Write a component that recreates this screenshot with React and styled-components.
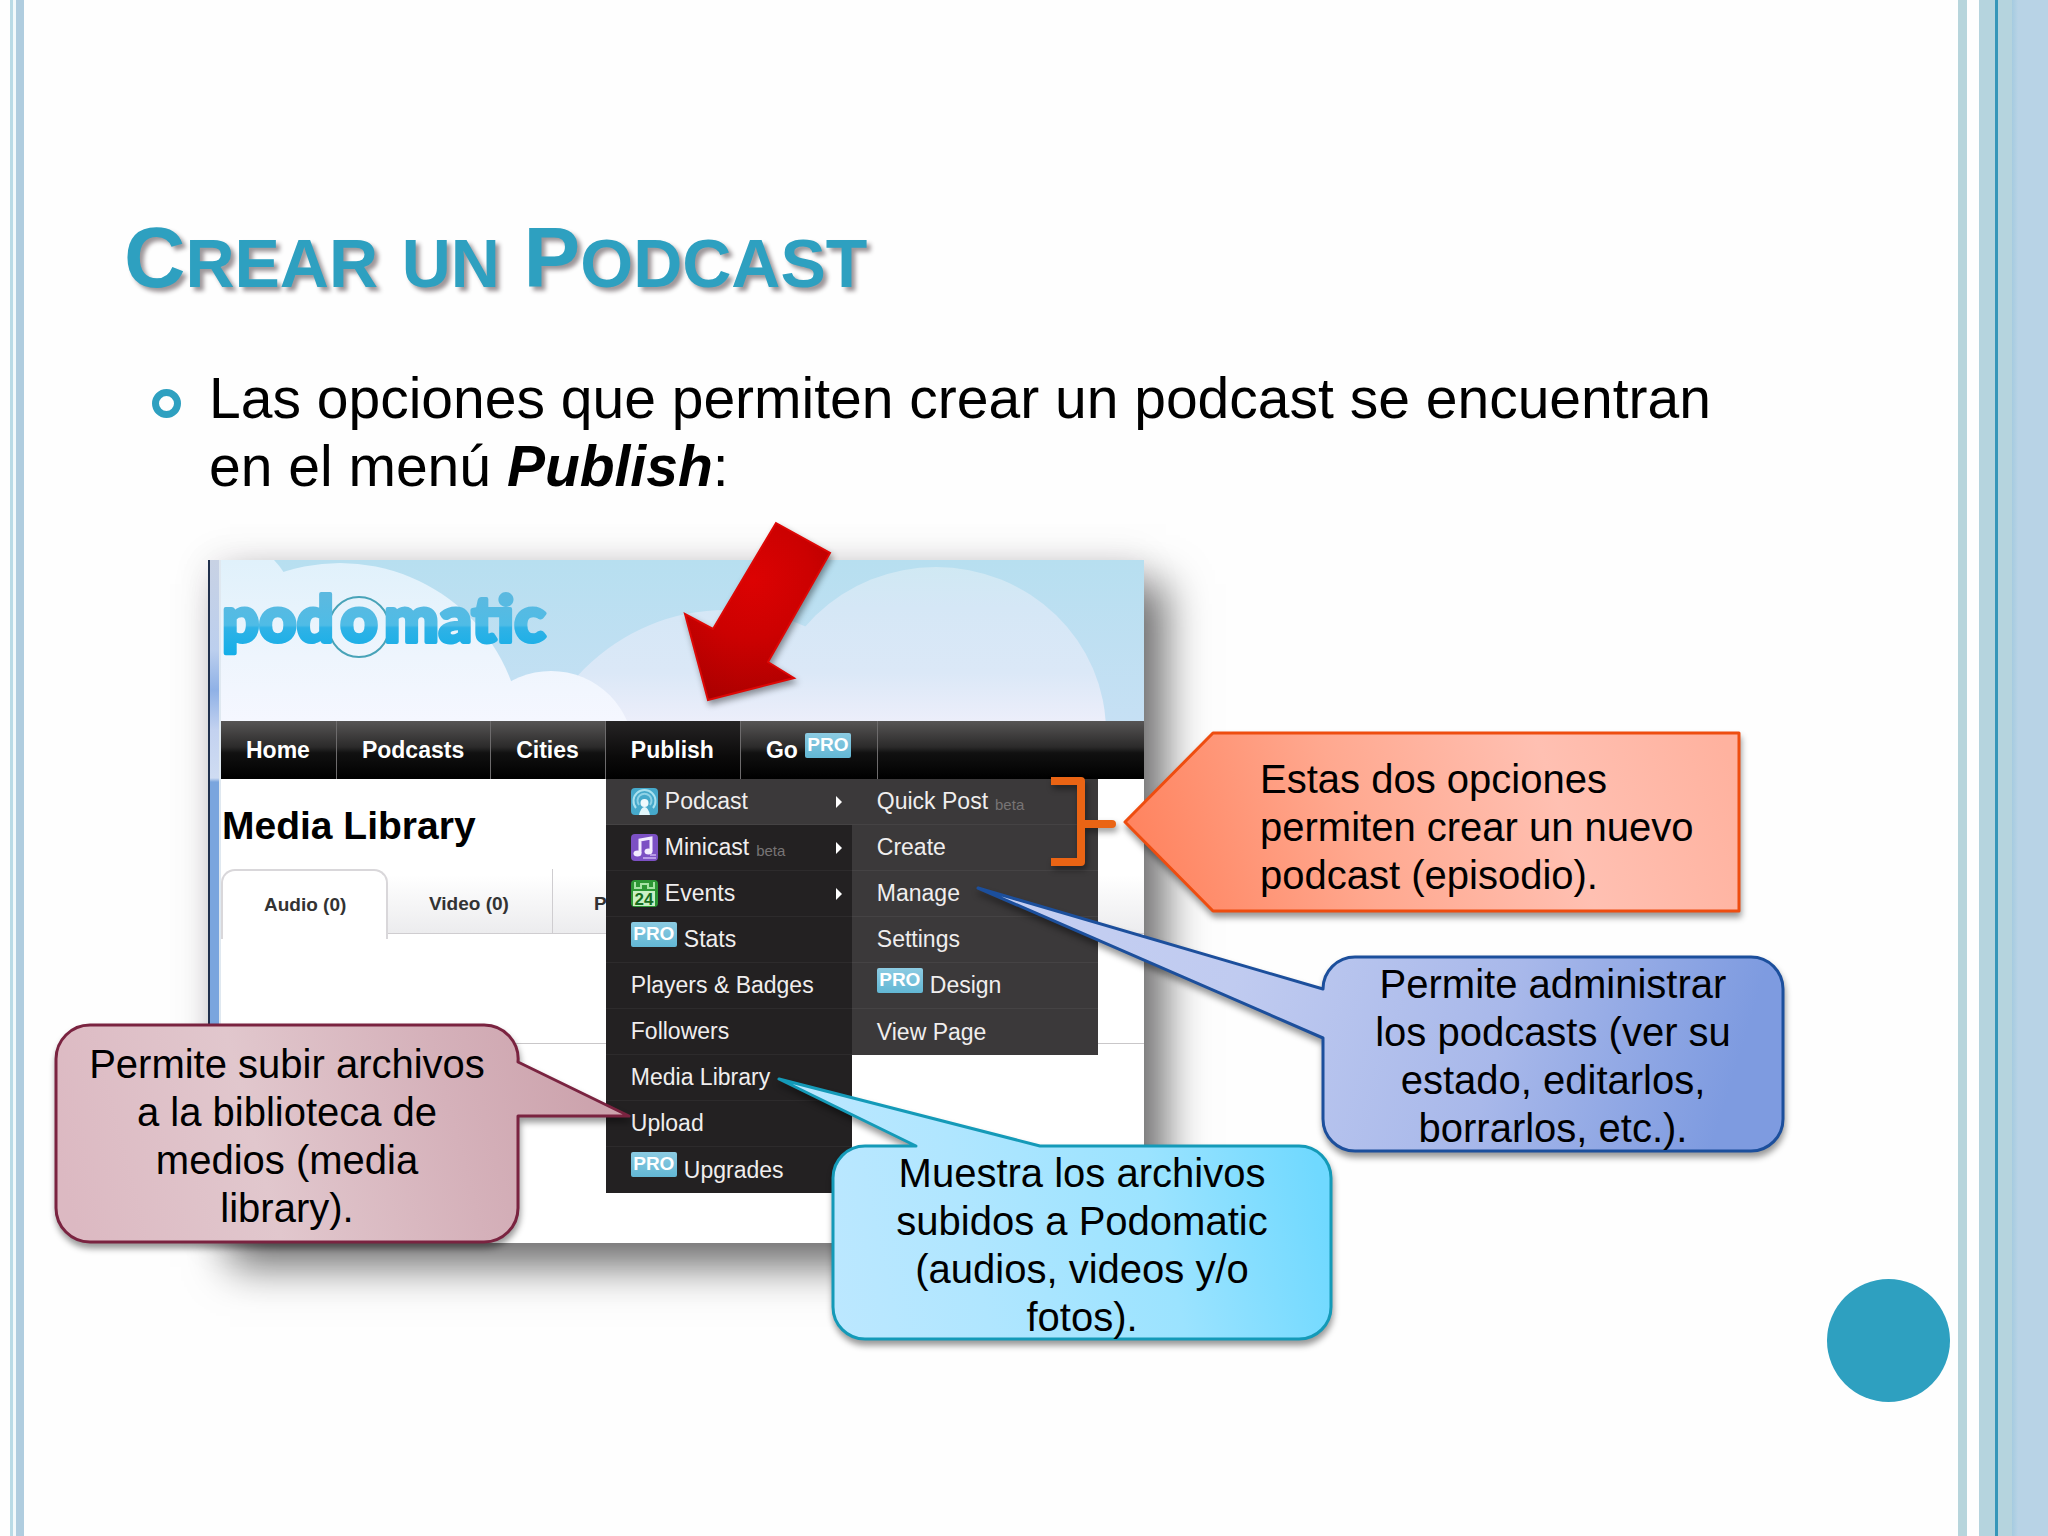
import styled, { createGlobalStyle, css } from "styled-components";

const GlobalStyle = createGlobalStyle`
  * {
    box-sizing: border-box;
  }
  body {
    margin: 0;
    background: #fefefe;
    color: #000;
    font-family: "Liberation Sans", Arial, sans-serif;
  }
  h1, h2, p, ul, figure {
    margin: 0;
    padding: 0;
  }
  ul {
    list-style: none;
  }
`;

/* ---------- slide ---------- */

const Slide = styled.div`
  display: flex;
  min-height: 100vh;
  overflow: hidden;
`;

const LeftRail = styled.div`
  flex: 0 0 24px;
  background: linear-gradient(
    to right,
    #fefefe 10px,
    #b9dbe6 10px 13px,
    #f2f9fb 13px 16px,
    #b0cddf 16px
  );
`;

const RightRail = styled.div`
  flex: 0 0 90px;
  background: linear-gradient(
    to right,
    #b7d5dc 9px,
    #fefefe 9px 21px,
    #b5d4de 21px 37px,
    #3696b9 37px 40px,
    #b5d4de 40px 54px,
    #a5cbe0 54px,
    #b8d3e6 60px
  );
`;

const Main = styled.main`
  flex: 1;
  min-width: 0;
  padding: 210px 8px 0 98px;
`;

const Title = styled.h1`
  padding-left: 2px;
  color: #2ea0c0;
  font-size: 68px;
  line-height: 96px;
  text-transform: uppercase;
  text-shadow: 4px 4px 4px rgba(40, 25, 30, 0.45);
`;

const Initial = styled.span`
  font-size: 85px;
`;

const Points = styled.ul`
  max-width: 1600px;
  margin-top: 53px;
  padding-left: 30px;
`;

const Point = styled.li`
  display: flex;
  gap: 28px;
  font-size: 57px;
  line-height: 68px;
`;

const Ring = styled.span`
  flex: 0 0 29px;
  height: 29px;
  margin-top: 25px;
  border: 7px solid #2ea0c0;
  border-radius: 50%;
`;

const Keyword = styled.strong`
  font-style: italic;
`;

const Footer = styled.footer`
  display: flex;
  justify-content: flex-end;
  padding-top: 36px;
`;

const Dot = styled.div`
  width: 123px;
  height: 123px;
  border-radius: 50%;
  background: #2ea0c0;
`;

/* ---------- browser window ---------- */

const Figure = styled.figure`
  position: relative;
  margin: 60px 0 0 86px;
`;

const Browser = styled.div`
  display: flex;
  width: 936px;
  max-width: 100%;
  background: #fff;
  box-shadow:
    22px 24px 40px rgba(0, 0, 0, 0.54),
    0 0 36px rgba(40, 20, 40, 0.1);
`;

const WindowEdge = styled.div`
  flex: 0 0 13px;
  border-left: 2px solid #20304c;
  border-right: 2px solid #dfe8f0;
  background: linear-gradient(#c8d2e4, #bccfee 90px, #8fb1e6 130px, #c3d2f0 170px, #cfdcf2 218px, #7aa5de 222px);
`;

const Page = styled.div`
  flex: 1;
  min-width: 0;
`;

const Sky = styled.svg`
  display: block;
  width: 100%;
  height: 161px;
`;

const Nav = styled.nav`
  position: relative;
  z-index: 1;
  background: linear-gradient(#575555, #2b2a2a 45%, #111 55%, #000);
`;

const NavList = styled.ul`
  display: flex;
  height: 58px;
`;

const NavItem = styled.li`
  position: relative;
  border-right: 1px solid #6d6b6c;
  ${(props) => props.$open && css`
    background: linear-gradient(#262425, #0c0b0b 60%, #000);
  `}
`;

const NavLink = styled.a`
  display: flex;
  align-items: center;
  gap: 7px;
  height: 100%;
  padding: 0 26px 0 25px;
  color: #fff;
  font-size: 23px;
  font-weight: 700;
  text-decoration: none;
`;

const Menu = styled.ul`
  position: absolute;
  top: ${(props) => (props.$sub ? "0" : "100%")};
  left: ${(props) => (props.$sub ? "100%" : "0")};
  width: 246px;
  background: ${(props) => (props.$sub ? "#3b393a" : "#232122")};
`;

const MenuItem = styled.li`
  height: 46px;
  border-bottom: 1px solid ${(props) => (props.$light ? "#454344" : "#2d2b2c")};
  background: ${(props) => (props.$light ? "#3b393a" : "transparent")};
  &:last-child {
    border-bottom: 0;
  }
`;

const MenuLink = styled.a`
  display: flex;
  align-items: center;
  gap: 7px;
  height: 100%;
  padding: 0 10px 0 25px;
  color: #f0eeee;
  font-size: 23px;
  white-space: nowrap;
  text-decoration: none;
`;

const Pro = styled.span`
  align-self: flex-start;
  width: 46px;
  height: 25px;
  margin-top: ${(props) => (props.$nav ? "12px" : "5px")};
  border-radius: 2px;
  background: linear-gradient(#8ccbe2, #62b7d4);
  color: #fff;
  font-size: 19px;
  font-weight: 700;
  line-height: 24px;
  text-align: center;
`;

const Beta = styled.small`
  padding-top: 5px;
  color: #777475;
  font-size: 15px;
`;

const Caret = styled.span`
  margin-left: auto;
  border: 6px solid transparent;
  border-right: 0;
  border-left-color: #fff;
`;

const Heading = styled.h2`
  padding: 24px 0 0 1px;
  font-size: 39px;
  line-height: 46px;
`;

const Tabs = styled.div`
  display: flex;
  height: 65px;
  margin-top: 20px;
  border-bottom: 1px solid #cfcdd0;
  background: linear-gradient(#fff 6px, #ececee);
`;

const Tab = styled.button`
  flex: 0 0 165px;
  height: 65px;
  padding: 4px 0 0 41px;
  border: 0;
  border-right: 1px solid #cfcdd0;
  background: transparent;
  color: #333;
  font-family: inherit;
  font-size: 19px;
  font-weight: 700;
  text-align: left;
  ${(props) => props.$active && css`
    flex-basis: 167px;
    height: 70px;
    padding-bottom: 5px;
    border: 2px solid #d9d7da;
    border-bottom: 0;
    border-radius: 14px 14px 0 0;
    background: #fff;
  `}
`;

const Library = styled.div`
  height: 110px;
  border-bottom: 1px solid #c9c7c9;
`;

const Blank = styled.div`
  height: 199px;
`;

/* ---------- annotations over the window ---------- */

const Overlay = styled.svg`
  position: absolute;
  top: 0;
  left: 0;
  width: 1px;
  height: 1px;
  overflow: visible;
  z-index: 2;
  filter: drop-shadow(2px 4px 3px rgba(0, 0, 0, 0.4));
`;

const Note = styled.div`
  position: absolute;
  z-index: 2;
  top: ${(props) => props.$top}px;
  left: ${(props) => props.$left}px;
  display: flex;
  align-items: center;
  width: ${(props) => props.$width}px;
  height: ${(props) => props.$height}px;
  padding: ${(props) => props.$pad};
`;

const NoteShape = styled.svg`
  position: absolute;
  top: 0;
  left: 0;
  width: 100%;
  height: 100%;
  overflow: visible;
  filter: drop-shadow(1px 5px 3px rgba(0, 0, 0, 0.4));
`;

const NoteText = styled.p`
  position: relative;
  flex: 1;
  font-size: 40px;
  line-height: 48px;
  text-align: ${(props) => props.$align || "center"};
`;

const notes = [
  {
    id: "create",
    text: "Estas dos opciones permiten crear un nuevo podcast (episodio).",
    left: 917, top: 173, width: 614, height: 178,
    pad: "10px 30px 0 135px",
    align: "left",
    d: "M0 89 L88 0 H614 V178 H88 Z",
    stroke: "#ee4d10",
    stops: ["#ff8460", "#ffa88f", "#ffc0b2", "#ffb29f"],
    dir: [0, 0.4, 1, 0.3],
  },
  {
    id: "manage",
    text: "Permite administrar los podcasts (ver su estado, editarlos, borrarlos, etc.).",
    left: 1115, top: 397, width: 460, height: 194,
    pad: "4px 36px 0",
    d: "M0 32 A32 32 0 0 1 32 0 H428 A32 32 0 0 1 460 32 V162 A32 32 0 0 1 428 194 H32 A32 32 0 0 1 0 162 V81 L-345 -69 Z",
    stroke: "#1c4f9c",
    stops: ["#c5cff2", "#c0cbf0", "#a8b8ea", "#7e9be0"],
    dir: [0, 0, 1, 0.1],
  },
  {
    id: "library",
    text: "Muestra los archivos subidos a Podomatic (audios, videos y/o fotos).",
    left: 625, top: 586, width: 498, height: 193,
    pad: "4px 50px 0",
    d: "M32 0 H83 L-54 -67 L207 0 H466 A32 32 0 0 1 498 32 V161 A32 32 0 0 1 466 193 H32 A32 32 0 0 1 0 161 V32 A32 32 0 0 1 32 0 Z",
    stroke: "#149ab8",
    stops: ["#bfe8ff", "#b0e6ff", "#9be3ff", "#70d9ff"],
    dir: [0, 0.7, 1, 0.6],
  },
  {
    id: "upload",
    text: "Permite subir archivos a la biblioteca de medios (media library).",
    left: -152, top: 465, width: 462, height: 217,
    pad: "4px 32px 0",
    d: "M34 0 H428 A34 34 0 0 1 462 37 L573 91 H462 V183 A34 34 0 0 1 428 217 H34 A34 34 0 0 1 0 183 V34 A34 34 0 0 1 34 0 Z",
    stroke: "#7a2340",
    stops: ["#dcb9c2", "#e1c7cd", "#d5b1ba", "#cba1ab"],
    dir: [0, 0.6, 1, 0.5],
  },
];

const Callout = ({ note }) => (
  <Note $left={note.left} $top={note.top} $width={note.width} $height={note.height} $pad={note.pad}>
    <NoteShape aria-hidden="true">
      <defs>
        <linearGradient id={note.id} x1={note.dir[0]} y1={note.dir[1]} x2={note.dir[2]} y2={note.dir[3]}>
          <stop offset="0" stopColor={note.stops[0]} />
          <stop offset="0.35" stopColor={note.stops[1]} />
          <stop offset="0.7" stopColor={note.stops[2]} />
          <stop offset="1" stopColor={note.stops[3]} />
        </linearGradient>
      </defs>
      <path d={note.d} fill={`url(#${note.id})`} stroke={note.stroke} strokeWidth="3" strokeLinejoin="round" />
    </NoteShape>
    <NoteText $align={note.align}>{note.text}</NoteText>
  </Note>
);

/* ---------- icons ---------- */

const PodcastIcon = () => (
  <svg width="27" height="27" viewBox="0 0 27 27" aria-hidden="true">
    <rect width="27" height="27" rx="4" fill="#46a9cb" />
    <path d="M5 20 A11 11 0 1 1 22 20" fill="none" stroke="#a9e0ee" strokeWidth="2" />
    <path d="M8 17 A7 7 0 1 1 19 17" fill="none" stroke="#8fd2e6" strokeWidth="2" />
    <circle cx="13.5" cy="15" r="4" fill="#eefafd" />
    <path d="M8 27 Q10 19 13.5 19 Q17 19 19 27 Z" fill="#e2f6fa" />
  </svg>
);

const MinicastIcon = () => (
  <svg width="27" height="27" viewBox="0 0 27 27" aria-hidden="true">
    <rect width="27" height="27" rx="4" fill="#7c50c4" />
    <path d="M9 19 V6 L20 4 V17" fill="none" stroke="#f3ecff" strokeWidth="3" />
    <ellipse cx="6.5" cy="19.5" rx="4" ry="3" fill="#f3ecff" />
    <ellipse cx="17.5" cy="17.5" rx="4" ry="3" fill="#f3ecff" />
    <path d="M12 24 H25 M19 21 H25" stroke="#b79ae6" strokeWidth="2" />
  </svg>
);

const EventsIcon = () => (
  <svg width="27" height="27" viewBox="0 0 27 27" aria-hidden="true">
    <rect width="27" height="27" rx="4" fill="#2c9634" />
    <path d="M4 2 V8 H10 V4 H17 V8 H23 V2" fill="none" stroke="#a5e2a4" strokeWidth="2" />
    <path d="M2 11 H24 V26 H2 Z" fill="#c9f0c4" />
    <text x="13" y="25" textAnchor="middle" fontFamily="Liberation Sans, sans-serif" fontSize="17" fontWeight="700" fill="#176c20">24</text>
  </svg>
);

const icons = { podcast: <PodcastIcon />, minicast: <MinicastIcon />, events: <EventsIcon /> };

const podcastMenu = [
  { label: "Quick Post", beta: true },
  { label: "Create" },
  { label: "Manage" },
  { label: "Settings" },
  { label: "Design", pro: true },
  { label: "View Page" },
];

const publishMenu = [
  { label: "Podcast", icon: "podcast", items: podcastMenu },
  { label: "Minicast", icon: "minicast", beta: true, more: true },
  { label: "Events", icon: "events", more: true },
  { label: "Stats", pro: true },
  { label: "Players & Badges" },
  { label: "Followers" },
  { label: "Media Library" },
  { label: "Upload" },
  { label: "Upgrades", pro: true },
];

const navItems = [
  { label: "Home" },
  { label: "Podcasts" },
  { label: "Cities" },
  { label: "Publish", items: publishMenu },
  { label: "Go", pro: true },
];

const DropMenu = ({ items, sub }) => (
  <Menu $sub={sub}>
    {items.map((item) => (
      <MenuItem key={item.label} $light={sub || Boolean(item.items)}>
        <MenuLink href="#">
          {item.icon && icons[item.icon]}
          {item.pro && <Pro>PRO</Pro>}
          <span>{item.label}</span>
          {item.beta && <Beta>beta</Beta>}
          {(item.items || item.more) && <Caret />}
        </MenuLink>
        {item.items && <DropMenu items={item.items} sub />}
      </MenuItem>
    ))}
  </Menu>
);

const Banner = () => (
  <Sky viewBox="0 0 923 161" preserveAspectRatio="xMinYMin slice" role="img" aria-label="podomatic">
    <defs>
      <linearGradient id="sky" x1="0" y1="0" x2="0" y2="1">
        <stop offset="0" stopColor="#b7dff0" />
        <stop offset="1" stopColor="#c6e0f4" />
      </linearGradient>
      <linearGradient id="far" gradientUnits="userSpaceOnUse" x1="0" y1="0" x2="0" y2="161">
        <stop offset="0" stopColor="#cfe9f3" />
        <stop offset="0.3" stopColor="#d5e7f6" />
        <stop offset="0.7" stopColor="#dbe8f7" />
        <stop offset="1" stopColor="#eceefa" />
      </linearGradient>
      <linearGradient id="near" gradientUnits="userSpaceOnUse" x1="0" y1="0" x2="0" y2="161">
        <stop offset="0" stopColor="#e0f1fb" />
        <stop offset="0.6" stopColor="#eef5fd" />
        <stop offset="1" stopColor="#f5f7ff" />
      </linearGradient>
      <linearGradient id="brand" gradientUnits="userSpaceOnUse" x1="0" y1="36" x2="0" y2="97">
        <stop offset="0" stopColor="#5bb9e0" />
        <stop offset="0.48" stopColor="#4fbce6" />
        <stop offset="0.52" stopColor="#2fb2e6" />
        <stop offset="1" stopColor="#12aee8" />
      </linearGradient>
    </defs>
    <rect width="923" height="161" fill="url(#sky)" />
    <circle cx="505" cy="250" r="200" fill="url(#far)" />
    <ellipse cx="715" cy="172" rx="170" ry="165" fill="url(#far)" />
    <circle cx="-10" cy="60" r="87" fill="url(#near)" />
    <circle cx="119" cy="186" r="183" fill="url(#near)" />
    <circle cx="330" cy="194" r="83" fill="url(#near)" />
    <circle cx="138" cy="67" r="30" fill="none" stroke="#48a3b8" strokeWidth="2" />
    <g
      fill="url(#brand)"
      stroke="url(#brand)"
      strokeWidth="4"
      strokeLinejoin="round"
      fontFamily="Lato, sans-serif"
      fontWeight="900"
      fontSize="65"
    >
      <text x="1" y="82">pod</text>
      <text x="138" y="82" textAnchor="middle">o</text>
      <text x="163" y="82">matic</text>
    </g>
  </Sky>
);

const App = () => {
  return (
    <>
      <GlobalStyle />
      <Slide>
        <LeftRail />
        <Main>
          <Title>
            <Initial>C</Initial>rear<Initial> </Initial>un<Initial> P</Initial>odcast
          </Title>
          <Points>
            <Point>
              <Ring />
              <p>
                Las opciones que permiten crear un podcast se encuentran en el menú{" "}
                <Keyword>Publish</Keyword>:
              </p>
            </Point>
          </Points>
          <Figure>
            <Browser>
              <WindowEdge />
              <Page>
                <Banner />
                <Nav>
                  <NavList>
                    {navItems.map((item) => (
                      <NavItem key={item.label} $open={Boolean(item.items)}>
                        <NavLink href="#">
                          <span>{item.label}</span>
                          {item.pro && <Pro $nav>PRO</Pro>}
                        </NavLink>
                        {item.items && <DropMenu items={item.items} />}
                      </NavItem>
                    ))}
                  </NavList>
                </Nav>
                <Heading>Media Library</Heading>
                <Tabs>
                  <Tab type="button" $active>Audio (0)</Tab>
                  <Tab type="button">Video (0)</Tab>
                  <Tab type="button">P</Tab>
                </Tabs>
                <Library />
                <Blank />
              </Page>
            </Browser>
            <Overlay aria-hidden="true">
              <defs>
                <radialGradient id="arrow" gradientUnits="userSpaceOnUse" cx="545" cy="20" r="130">
                  <stop offset="0" stopColor="#dc0202" />
                  <stop offset="0.45" stopColor="#cc0101" />
                  <stop offset="1" stopColor="#a80000" />
                </radialGradient>
              </defs>
              <path
                d="M568 -37 L622 -7 L560 102 L586 118 L500 140 L477 54 L505 69 Z"
                fill="url(#arrow)"
                stroke="#dd0806"
                strokeWidth="2"
              />
              <path
                d="M843 221 H873 V302 H843 M873 264 H904"
                fill="none"
                stroke="#ea6414"
                strokeWidth="8"
                strokeLinejoin="round"
              />
              <circle cx="904" cy="264" r="4" fill="#ea6414" />
            </Overlay>
            {notes.map((note) => (
              <Callout key={note.id} note={note} />
            ))}
          </Figure>
          <Footer>
            <Dot />
          </Footer>
        </Main>
        <RightRail />
      </Slide>
    </>
  );
};

export default App;
